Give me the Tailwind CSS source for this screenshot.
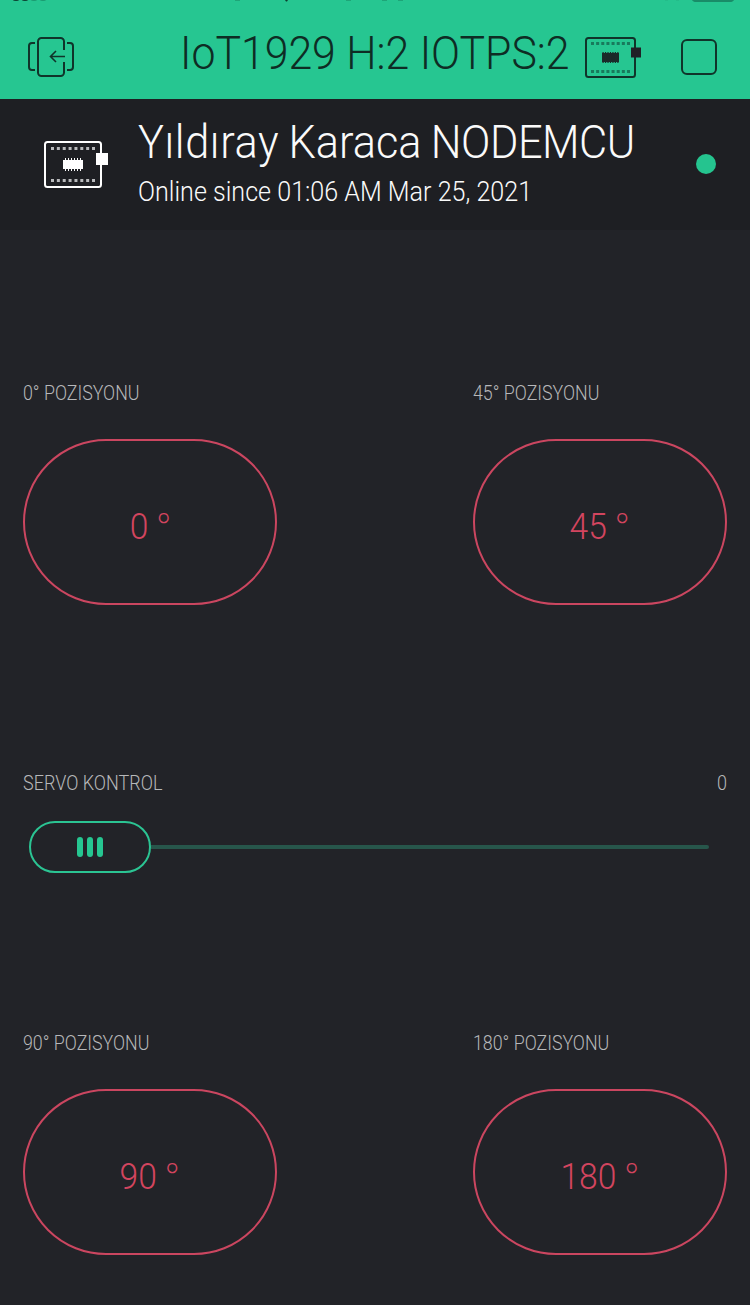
<!DOCTYPE html>
<html lang="tr">
<head>
<meta charset="utf-8">
<title>IoT</title>
<script src="https://cdn.jsdelivr.net/npm/@tailwindcss/browser@4"></script>
</head>
<body class="w-[750px] h-[1305px] overflow-hidden bg-[#222328] font-['Roboto',sans-serif] font-light whitespace-nowrap">
<header class="relative flex h-[99px] bg-[#26c691] text-[#0e2c24]">
  <svg class="absolute left-0 top-0" width="750" height="3" viewBox="0 0 750 3">
    <g fill="#0c3f30"><ellipse cx="16" cy="-1" rx="3.5" ry="2"/><ellipse cx="25" cy="-1" rx="3.5" ry="2"/></g>
    <g fill="#1b9a70"><ellipse cx="34" cy="-1" rx="3.5" ry="2"/><ellipse cx="43" cy="-1" rx="3.5" ry="2"/></g>
    <path d="M285 0h3l-1 1.500h-1z" fill="#0c3f30"/>
    <path d="M235 0h5M346 0h5M382 0h5M398 0h5" stroke="#178461"/>
    <path d="M665 0h3M676 0h3" stroke="#22b283"/>
    <path d="M692 0c1 1.500 2 2 4 2h34c2 0 3-.5 4-2z" fill="#198c68"/>
  </svg>
  <svg class="mt-[34px] ml-[26px] shrink-0" width="50" height="46" viewBox="26 34 50 46" fill="none" stroke="#10342a" stroke-width="2">
    <path d="M64 50v-8.500a3.500 3.500 0 0 0-3.500-3.500H41.500a3.500 3.500 0 0 0-3.500 3.500v31a3.500 3.500 0 0 0 3.500 3.500H60.500a3.500 3.500 0 0 0 3.500-3.500V62"/>
    <path d="M35 43h-3q-3 0-3 3v21q0 3 3 3h3M67 43h3q3 0 3 3v21q0 3-3 3h-3"/>
    <path d="M65 56.500H51M56 51l-5.500 5.500L56 62" stroke-width="1.600"/>
  </svg>
  <h1 class="mt-[30px] ml-[104px] w-[405px] h-[46px] origin-left scale-x-[.92] text-[46.500px] leading-[46px]">IoT1929 H:2 IOTPS:2</h1>
  <svg class="mt-[34px] -ml-[3px] shrink-0" width="62" height="48" viewBox="582 34 62 48" fill="none">
    <rect x="586" y="38" width="49" height="39" rx="2.500" stroke="#10342a" stroke-width="2"/>
    <path d="M591 43.500h39M591 71.500h39" stroke="#187a5c" stroke-width="3" stroke-dasharray="3 2.140"/>
    <path d="M602 53h17v9h-17z" fill="#1b2b2a"/><path d="M602.500 57.500h16" stroke="#1b2b2a" stroke-width="11" stroke-dasharray="1.200 1.260"/>
    <path d="M631 47.500h10v10h-10z" fill="#202126"/>
  </svg>
  <div class="mt-[39px] ml-[37px] size-9 shrink-0 rounded-[6px] border-2 border-[#10342a]"></div>
</header>
<section class="flex h-[131px] bg-[#1e1f23] text-[#fafafa]">
  <svg class="mt-[39px] ml-[42px] shrink-0" width="70" height="54" viewBox="42 138 70 54" fill="none">
    <rect x="45" y="142" width="56" height="45" rx="2.500" stroke="#fff" stroke-width="2"/>
    <path d="M51 148.500h44M51 180.500h44" stroke="#b9babc" stroke-width="3" stroke-dasharray="3 2.860"/>
    <path d="M63 160h20v9H63z" fill="#fff"/><path d="M65 164.500h17" stroke="#fff" stroke-width="13" stroke-dasharray="1 2"/>
    <path d="M96 153h12v12H96z" fill="#fff"/>
  </svg>
  <div class="mt-[20px] ml-[26px] w-[550px]">
    <h2 class="w-[535px] origin-left scale-x-[.932] text-[46.500px] leading-[46px] [word-spacing:-1.5px]"><span class="tracking-[.65px]">Yıldıray</span> Karaca <span class="tracking-[-.5px]">NODEMCU</span></h2>
    <p class="mt-[13px] w-[430px] origin-left scale-x-[.93] text-[27px] leading-7">Online since 01:06 AM Mar 25, 2021</p>
  </div>
  <div class="mt-[55px] ml-2 size-5 shrink-0 rounded-full bg-[#25c48f]"></div>
</section>
<main class="px-[23px] pt-[153px] text-[#b7b8ba]">
  <div class="flex justify-between">
    <div class="w-[254px]">
      <div class="h-5 origin-left scale-x-[.89] text-[20px] leading-5">0° POZISYONU</div>
      <div class="mt-9 flex h-[166px] items-center justify-center rounded-full border-2 border-[#cb4660] pt-[7px] text-[36.500px] leading-9 text-[#d3455f]"><span class="scale-x-[.92]">0 <span class="font-['Open_Sans']">°</span></span></div>
    </div>
    <div class="w-[254px]">
      <div class="h-5 origin-left scale-x-[.89] text-[20px] leading-5">45° POZISYONU</div>
      <div class="mt-9 flex h-[166px] items-center justify-center rounded-full border-2 border-[#cb4660] pt-[7px] text-[36.500px] leading-9 text-[#d3455f]"><span class="scale-x-[.92]">45 <span class="font-['Open_Sans']">°</span></span></div>
    </div>
  </div>
  <div class="mt-[168px] flex h-5 justify-between text-[20px] leading-5">
    <span class="origin-left scale-x-[.9]">SERVO KONTROL</span><span class="origin-right scale-x-[.9]">0</span>
  </div>
  <div class="mt-7 ml-[6px] flex h-[52px] items-center">
    <div class="flex h-[52px] w-[122px] items-center justify-center gap-1 rounded-full border-2 border-[#2bc493]">
      <i class="h-5 w-[6px] rounded-full bg-[#26c691]"></i><i class="h-5 w-[6px] rounded-full bg-[#26c691]"></i><i class="h-5 w-[6px] rounded-full bg-[#26c691]"></i>
    </div>
    <div class="h-1 w-[558px] rounded-r-full bg-[#27564b]"></div>
  </div>
  <div class="mt-[160px] flex justify-between">
    <div class="w-[254px]">
      <div class="h-5 origin-left scale-x-[.89] text-[20px] leading-5">90° POZISYONU</div>
      <div class="mt-9 flex h-[166px] items-center justify-center rounded-full border-2 border-[#cb4660] pt-[7px] text-[36.500px] leading-9 text-[#d3455f]"><span class="scale-x-[.92]">90 <span class="font-['Open_Sans']">°</span></span></div>
    </div>
    <div class="w-[254px]">
      <div class="h-5 origin-left scale-x-[.89] text-[20px] leading-5">180° POZISYONU</div>
      <div class="mt-9 flex h-[166px] items-center justify-center rounded-full border-2 border-[#cb4660] pt-[7px] text-[36.500px] leading-9 text-[#d3455f]"><span class="scale-x-[.92]">180 <span class="font-['Open_Sans']">°</span></span></div>
    </div>
  </div>
</main>
</body>
</html>
